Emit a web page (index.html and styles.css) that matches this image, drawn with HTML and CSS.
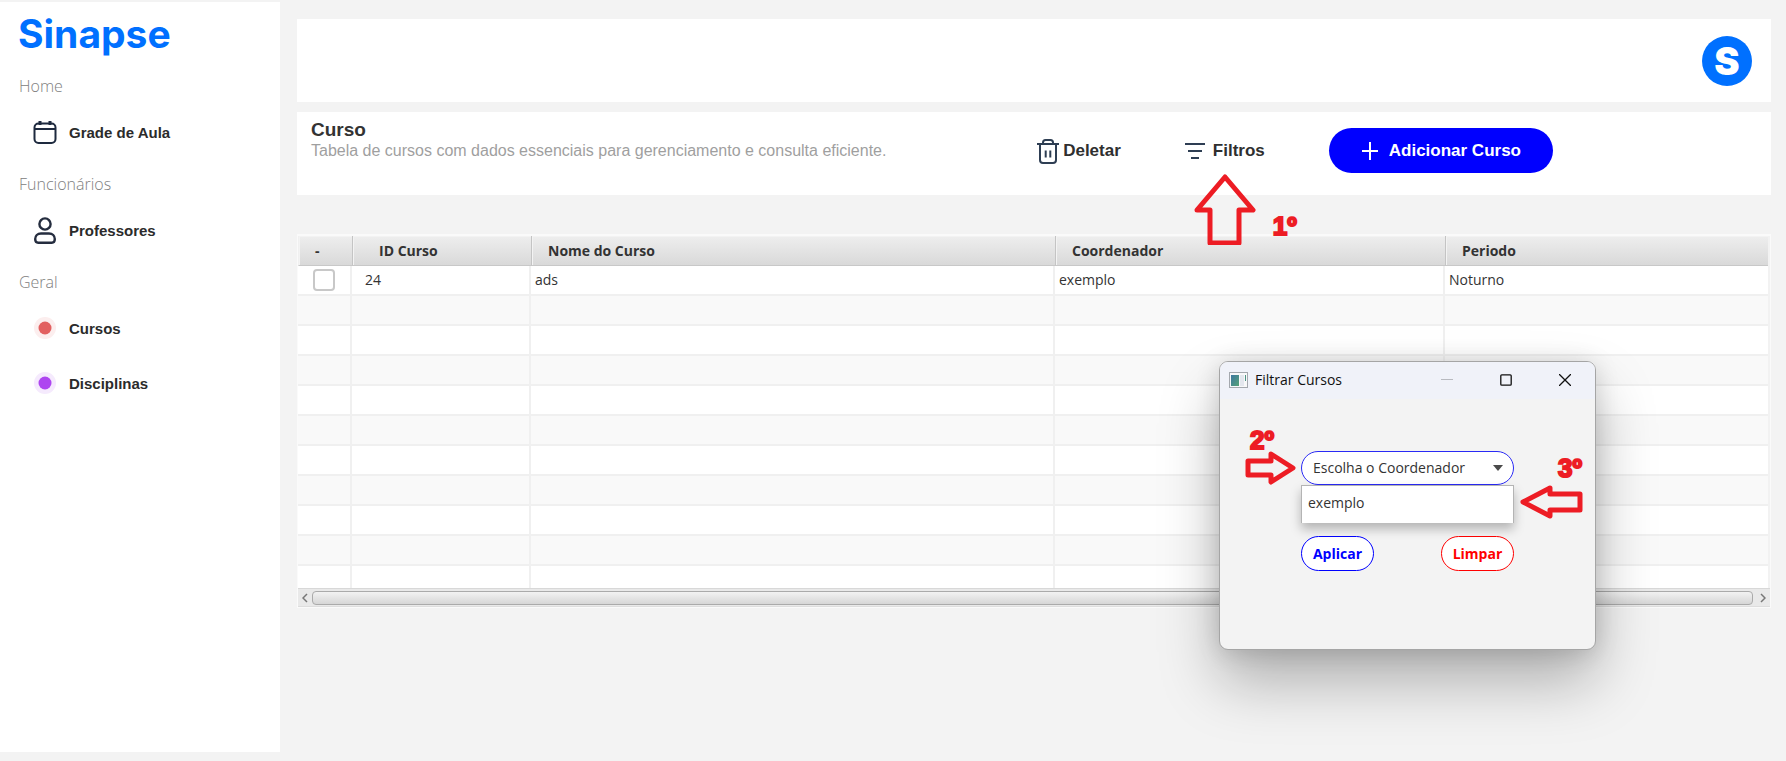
FILE: index.html
```html
<!DOCTYPE html>
<html lang="pt-BR">
<head>
<meta charset="utf-8">
<title>Sinapse - Cursos</title>
<link rel="stylesheet" href="styles.css">
</head>
<body>
<div class="app">
  <aside class="sidebar">
    <div class="brand">Sinapse</div>
    <nav class="menu">
      <h2 class="menu-title">Home</h2>
      <a class="menu-item" href="#">
        <svg class="menu-icon" viewBox="0 0 26 26" fill="none" stroke="#1e2a3f" stroke-width="2"><rect x="2.500" y="3.500" width="21" height="19.500" rx="4"/><path d="M3 9h20"/><path d="M8 1v4M18 1v4" stroke-width="3"/></svg>
        <span>Grade de Aula</span>
      </a>
      <h2 class="menu-title">Funcionários</h2>
      <a class="menu-item" href="#">
        <svg class="menu-icon" viewBox="0 0 26 26" fill="none" stroke="#252d3f" stroke-width="2.400"><circle cx="13" cy="6" r="5.600"/><path d="M9 15.500h8c3.500 0 5.800 2.400 5.800 5.600 0 2.600-1 3.700-3 3.700H6.200c-2 0-3-1.100-3-3.700 0-3.200 2.300-5.600 5.800-5.600z"/></svg>
        <span>Professores</span>
      </a>
      <h2 class="menu-title">Geral</h2>
      <a class="menu-item" href="#">
        <svg class="menu-icon" viewBox="0 0 26 26"><circle cx="13" cy="12" r="11" fill="#fceeee"/><circle cx="13" cy="12" r="6.500" fill="#e26060"/></svg>
        <span>Cursos</span>
      </a>
      <a class="menu-item" href="#">
        <svg class="menu-icon" viewBox="0 0 26 26"><circle cx="13" cy="12" r="11" fill="#f5eafd"/><circle cx="13" cy="12" r="6.500" fill="#ae46f0"/></svg>
        <span>Disciplinas</span>
      </a>
    </nav>
  </aside>

  <main class="content">
    <header class="card topbar"><div class="avatar">S</div></header>

    <section class="card heading">
      <div class="heading-text">
        <h1>Curso</h1>
        <p>Tabela de cursos com dados essenciais para gerenciamento e consulta eficiente.</p>
      </div>
      <button class="tool" type="button">
        <svg width="22" height="26" viewBox="0 0 22 26" fill="none" stroke="#2e3e53" stroke-width="2"><path d="M0 6h22"/><path d="M6 6V4.500Q6 2 8.500 2h5Q16 2 16 4.500V6"/><path d="M3 6v16q0 3 3 3h10q3 0 3-3V6"/><path d="M8.700 12.500v7M13.300 12.500v7"/></svg>
        Deletar
      </button>
      <button class="tool tool-filter" type="button">
        <svg width="20" height="18" viewBox="0 0 20 18" stroke="#2e3e53" stroke-width="2"><path d="M0 2h20M3 9h14M6 16h8"/></svg>
        Filtros
        <svg class="mark-arrow-up" width="66" height="72" viewBox="0 0 66 72" fill="none" stroke="#ed1c24" stroke-width="5" stroke-linejoin="round"><path d="M33 4L61 37H47V70H18V37H5z"/></svg>
        <span class="mark mark-one">1º</span>
      </button>
      <button class="add" type="button">
        <svg width="16" height="18" viewBox="0 0 16 18" stroke="#fff" stroke-width="2"><path d="M0 9h16M8 0v18"/></svg>
        Adicionar Curso
      </button>
    </section>

    <section class="grid">
      <table>
        <colgroup><col class="c-check"><col class="c-id"><col class="c-name"><col class="c-coord"><col></colgroup>
        <thead>
          <tr><th>-</th><th class="id">ID Curso</th><th>Nome do Curso</th><th>Coordenador</th><th>Periodo</th></tr>
        </thead>
        <tbody>
          <tr><td class="check"><input type="checkbox" aria-label="Selecionar ads"></td><td class="id">24</td><td>ads</td><td>exemplo</td><td>Noturno</td></tr>
          <tr><td></td><td></td><td></td><td></td><td></td></tr>
          <tr><td></td><td></td><td></td><td></td><td></td></tr>
          <tr><td></td><td></td><td></td><td></td><td></td></tr>
          <tr><td></td><td></td><td></td><td></td><td></td></tr>
          <tr><td></td><td></td><td></td><td></td><td></td></tr>
          <tr><td></td><td></td><td></td><td></td><td></td></tr>
          <tr><td></td><td></td><td></td><td></td><td></td></tr>
          <tr><td></td><td></td><td></td><td></td><td></td></tr>
          <tr><td></td><td></td><td></td><td></td><td></td></tr>
          <tr class="last"><td></td><td></td><td></td><td></td><td></td></tr>
        </tbody>
      </table>
      <div class="scrollbar">
        <svg width="6" height="10" viewBox="0 0 6 10" fill="none" stroke="#777" stroke-width="1.500"><path d="M5 1L1 5l4 4"/></svg>
        <div class="thumb"></div>
        <svg width="6" height="10" viewBox="0 0 6 10" fill="none" stroke="#777" stroke-width="1.500"><path d="M1 1l4 4-4 4"/></svg>
      </div>
    </section>
  </main>

  <div class="dialog" role="dialog" aria-labelledby="dialog-title">
    <div class="titlebar">
      <svg width="19" height="16" viewBox="0 0 19 16"><defs><linearGradient id="g" x2="1" y2="1"><stop stop-color="#3d77a0"/><stop offset="1" stop-color="#55a277"/></linearGradient></defs><rect x=".5" y=".5" width="18" height="15" fill="#f8f8f9" stroke="#a4a8ae"/><rect x="2" y="3" width="8" height="11" fill="url(#g)"/><path d="M11 3h4v11h-4z" fill="#e4e7ee"/><path d="M16.500 3v6" stroke="#4d9384"/></svg>
      <h2 id="dialog-title">Filtrar Cursos</h2>
      <button class="win" type="button" aria-label="Minimizar"><svg width="12" height="12" viewBox="0 0 12 12" stroke="#b8bac0"><path d="M0 5.500h12"/></svg></button>
      <button class="win" type="button" aria-label="Maximizar"><svg width="12" height="12" viewBox="0 0 12 12" fill="none" stroke="#111" stroke-width="1.300"><rect x=".8" y=".8" width="10.400" height="10.400" rx="1"/></svg></button>
      <button class="win" type="button" aria-label="Fechar"><svg width="12" height="12" viewBox="0 0 12 12" stroke="#111" stroke-width="1.300"><path d="M0 0l12 12M12 0L0 12"/></svg></button>
    </div>
    <form class="filter">
      <div class="combo">
        <select aria-label="Coordenador"><option>Escolha o Coordenador</option><option>exemplo</option></select>
        <svg class="caret" width="10" height="6" viewBox="0 0 10 6"><path d="M0 0h10L5 6z" fill="#4a4a4a"/></svg>
        <ul class="options"><li>exemplo</li></ul>
      </div>
      <div class="actions">
        <button class="pill apply" type="button">Aplicar</button>
        <button class="pill clear" type="button">Limpar</button>
      </div>
    </form>
    <svg class="mark-arrow-right" width="52" height="36" viewBox="0 0 52 36" fill="none" stroke="#ed1c24" stroke-width="5" stroke-linejoin="round"><path d="M4 11H27V4L49 18L27 32V25H4z"/></svg>
    <span class="mark mark-two">2º</span>
    <svg class="mark-arrow-left" width="64" height="36" viewBox="0 0 64 36" fill="none" stroke="#ed1c24" stroke-width="5" stroke-linejoin="round"><path d="M61 10H31V4L4 18L31 32V26H61z"/></svg>
    <span class="mark mark-three">3º</span>
  </div>
</div>
</body>
</html>
```
FILE: styles.css
```css
* { box-sizing: border-box; }

body {
  margin: 0;
  background: #f3f3f3;
  color: #333;
  font-family: "Open Sans", "Noto Sans", sans-serif;
  font-size: 14px;
}

h1, h2, p, ul { margin: 0; padding: 0; }
button { border: 0; padding: 0; background: none; cursor: pointer; }

.app {
  position: relative;
  display: flex;
  gap: 17px;
  min-height: 100vh;
  padding: 2px 15px 9px 0;
}

/* Sidebar */
.sidebar { width: 280px; flex: none; background: #fff; padding: 8px 18px; }
.brand { color: #0070ff; font: 700 39px/48px Inter, sans-serif; }
.menu { display: flex; flex-direction: column; padding-top: 16px; }
.menu-title { color: #808080; font-size: 16px; font-weight: 300; line-height: 24px; padding-left: 1px; }
.menu-item {
  display: flex;
  align-items: center;
  gap: 11px;
  height: 55px;
  margin: 7px 0 12px;
  padding-left: 14px;
  color: #2b2b2b;
  text-decoration: none;
  font: 700 15px/20px "Liberation Sans", Arial, sans-serif;
}
.menu-item + .menu-item { margin-top: -12px; }
.menu-icon { width: 26px; height: 26px; overflow: visible; }

/* Content */
.content { flex: 1; min-width: 0; padding-top: 17px; }
.card { background: #fff; height: 83px; display: flex; align-items: center; }
.topbar { justify-content: flex-end; padding-right: 19px; }
.avatar {
  width: 50px;
  height: 50px;
  border-radius: 50%;
  background: #0070ff;
  color: #fff;
  font: 900 38px/50px Inter, sans-serif;
  text-align: center;
}

.heading { margin-top: 10px; padding: 0 218px 0 14px; font-family: "Liberation Sans", Arial, sans-serif; }
.heading-text { flex: 1; align-self: flex-start; padding-top: 7px; }
.heading h1 { font-size: 19px; line-height: 22px; }
.heading p { color: #9f9f9f; font-size: 16px; line-height: 20px; }
.tool, .add { display: flex; align-items: center; font: 700 17px/20px "Liberation Sans", Arial, sans-serif; color: #2f2f2f; }
.tool { gap: 4px; margin-bottom: 6px; }
.tool-filter { position: relative; gap: 8px; margin-left: 64px; }
.add { gap: 11px; height: 45px; margin: 0 0 6px 64px; padding: 0 32px 0 33px; border-radius: 23px; background: #00f; color: #fff; }

/* Table */
.grid { margin-top: 39px; border: 1px solid #fafafa; border-top-width: 2px; background: #fff; }
table { width: 100%; border-collapse: separate; border-spacing: 0; table-layout: fixed; border-right: 2px solid #f2f2f2; }
.c-check { width: 54px; }
.c-id { width: 179px; }
.c-name { width: 524px; }
.c-coord { width: 390px; }
th {
  height: 30px;
  padding: 0 0 0 16px;
  text-align: left;
  font-size: 14px;
  line-height: 20px;
  background: linear-gradient(#eee, #d9d9d9);
  border-left: 1px solid #c4c4c4;
  border-bottom: 1px solid #c8c8c8;
  box-shadow: inset 1px 1px 0 #f3f3f3;
}
th:first-child { border-left-color: #f0f0f0; }
th.id { padding-left: 26px; }
td { height: 30px; padding: 0 0 0 4px; line-height: 20px; border-right: 2px solid #f0f0f0; border-bottom: 2px solid #f0f0f0; }
td:last-child { border-right: 0; }
td.id { padding-left: 13px; }
td.check { padding: 0 0 0 15px; }
tbody tr:nth-child(even) td { background: #f9f9f9; }
tbody tr.last td { height: 22px; border-bottom: 0; }
input[type="checkbox"] {
  display: block;
  appearance: none;
  width: 22px;
  height: 22px;
  margin: 0;
  border: 2px solid #c8c8c8;
  border-radius: 4px;
  background: #fff;
}
.scrollbar { display: flex; align-items: center; gap: 4px; height: 19px; padding: 0 4px; background: #e9e9e9; border-top: 1px solid #d8d8d8; border-bottom: 1px solid #ddd; }
.thumb { flex: 1; height: 14px; border: 1px solid #aaa; border-radius: 4px; background: linear-gradient(#f2f2f2, #d6d6d6); }
.thumb + svg { margin-left: 3px; }

/* Floating dialog */
.dialog {
  position: absolute;
  top: 361px;
  right: 190px;
  width: 377px;
  height: 289px;
  border: 1px solid #a5a5a5;
  border-radius: 9px;
  background: #f3f3f3;
  box-shadow: 0 32px 60px rgba(0, 0, 0, .28), 0 2px 24px rgba(0, 0, 0, .14);
}
.titlebar { display: flex; align-items: center; height: 37px; padding: 0 1px 1px 9px; border-radius: 8px 8px 0 0; background: #f0f2f9; }
.titlebar h2 { flex: 1; margin-left: 7px; color: #111; font-size: 14px; font-weight: 400; line-height: 20px; }
.win { width: 59px; height: 34px; display: flex; align-items: center; justify-content: center; }
.filter { width: 213px; margin: 52px 0 0 81px; }
.combo { position: relative; }
select {
  display: block;
  appearance: none;
  width: 100%;
  height: 34px;
  padding: 0 24px 0 11px;
  border: 1px solid #2a2af5;
  border-radius: 17px;
  background: #fff;
  color: #333;
  font: 14px/20px "Open Sans", "Noto Sans", sans-serif;
}
.caret { position: absolute; top: 14px; right: 11px; }
.options { list-style: none; height: 38px; padding: 7px 6px; border: 1px solid #b4b4b4; border-bottom: 0; background: #fff; box-shadow: 0 6px 10px rgba(0, 0, 0, .26); line-height: 20px; }
.actions { display: flex; justify-content: space-between; margin-top: 13px; }
.pill { width: 73px; height: 35px; border: 1px solid; border-radius: 18px; background: #fff; font: 700 14px/20px "Open Sans", "Noto Sans", sans-serif; }
.apply { color: #00f; }
.clear { color: #f00; }

/* Step markers drawn over the interface */
.mark { position: absolute; color: #ed1c24; font: 700 26px/26px "Liberation Sans", Arial, sans-serif; -webkit-text-stroke: 2px #ed1c24; }
.mark-arrow-up { position: absolute; left: 7px; top: 32px; z-index: 1; }
.mark-one { left: 88px; top: 72px; }
.mark-arrow-right { position: absolute; left: 24px; top: 88px; }
.mark-two { left: 30px; top: 65px; }
.mark-arrow-left { position: absolute; right: 12px; top: 122px; }
.mark-three { right: 13px; top: 93px; }
```
